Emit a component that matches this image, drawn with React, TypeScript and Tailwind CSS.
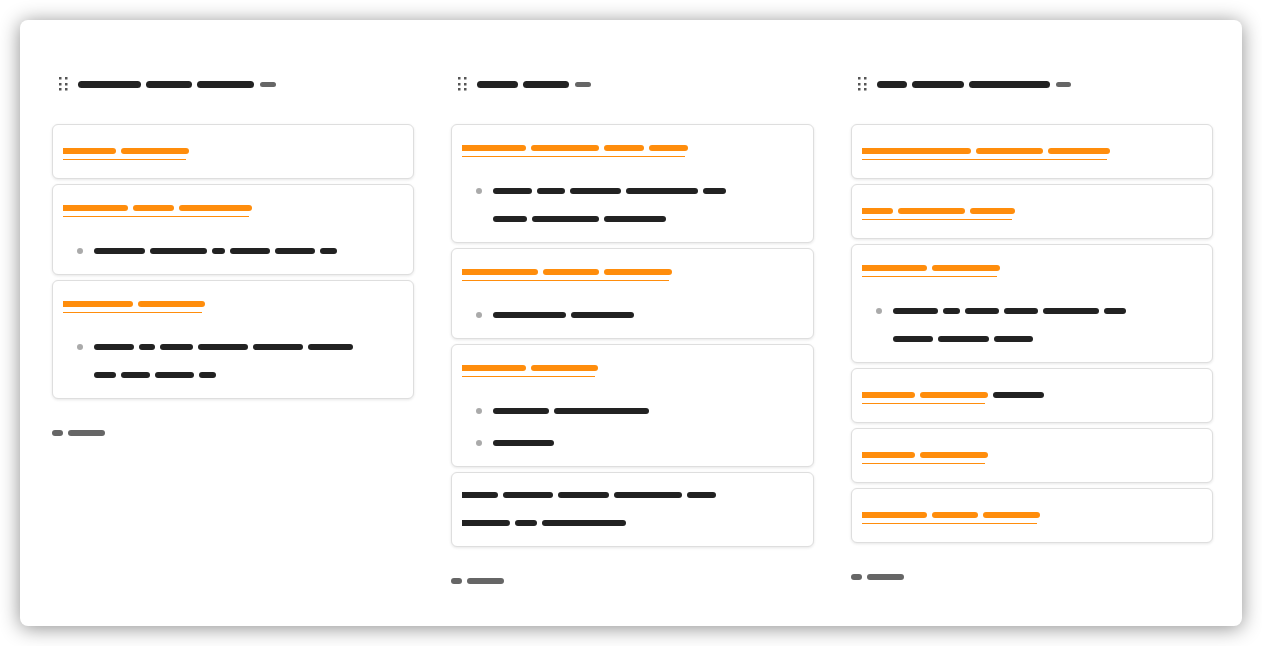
type Row = number[];

type CardData = {
  title?: number[];
  trail?: number[];
  items?: Row[][];
  para?: Row[];
};

type Column = {
  header: number[];
  count: number;
  cards: CardData[];
};

const columns: Column[] = [
  {
    header: [63, 46, 57],
    count: 16,
    cards: [
      { title: [53, 68] },
      { title: [65, 41, 73], items: [[[51, 57, 13, 40, 40, 17]]] },
      {
        title: [70, 67],
        items: [[[40, 16, 33, 50, 50, 45], [22, 29, 39, 17]]],
      },
    ],
  },
  {
    header: [41, 46],
    count: 16,
    cards: [
      {
        title: [64, 68, 40, 39],
        items: [[[39, 28, 51, 72, 23], [34, 67, 62]]],
      },
      { title: [76, 56, 68], items: [[[73, 63]]] },
      { title: [64, 67], items: [[[56, 95]], [[61]]] },
      { para: [[36, 50, 51, 68, 29], [48, 22, 84]] },
    ],
  },
  {
    header: [30, 52, 81],
    count: 15,
    cards: [
      { title: [109, 67, 62] },
      { title: [31, 67, 45] },
      {
        title: [65, 68],
        items: [[[45, 17, 34, 34, 56, 22], [40, 51, 39]]],
      },
      { title: [53, 68], trail: [51] },
      { title: [53, 68] },
      { title: [65, 46, 57] },
    ],
  },
];

// squareStart: the first bar of a line that starts flush with the card text edge
function Bars({ widths, cls, squareStart }: { widths: number[]; cls: string; squareStart?: boolean }) {
  return (
    <div className="flex gap-[5px]">
      {widths.map((w, i) => (
        <span
          key={i}
          className={`block ${squareStart && i === 0 ? "rounded-r-full" : "rounded-full"} ${cls}`}
          style={{ width: w }}
        />
      ))}
    </div>
  );
}

function Handle() {
  return (
    <svg width="9" height="14" viewBox="0 0 9 14" className="ml-[7px] shrink-0">
      {[0, 6].map((x) =>
        [0, 6, 11].map((y) => (
          <rect key={`${x}-${y}`} x={x} y={y} width="2.5" height="2.5" fill="#555" />
        ))
      )}
    </svg>
  );
}

function Title({ widths, trail }: { widths: number[]; trail?: number[] }) {
  return (
    <div className="flex h-5 items-start gap-[5px] pt-[7px]">
      <div className="flex flex-col gap-[5px]">
        <Bars widths={widths} cls="h-[6px] bg-[#ff8d0c]" squareStart />
        <div className="h-px w-[calc(100%-3px)] bg-[#ff8d0c]" />
      </div>
      {trail && <Bars widths={trail} cls="h-[6px] bg-[#222]" />}
    </div>
  );
}

function Card({ card }: { card: CardData }) {
  const base =
    "rounded-[6px] border border-[#dedede] bg-white px-[10px] shadow-[0_1px_3px_rgba(0,0,0,0.1)]";

  if (card.para) {
    return (
      <div className={`${base} pt-[8px] pb-[9px]`}>
        {card.para.map((row, i) => (
          <div key={i} className="flex h-[28px] items-center">
            <Bars widths={row} cls="h-[6px] bg-[#222]" squareStart />
          </div>
        ))}
      </div>
    );
  }

  if (!card.items) {
    return (
      <div className={`${base} h-[55px] pt-[16px]`}>
        <Title widths={card.title!} trail={card.trail} />
      </div>
    );
  }

  return (
    <div className={`${base} pt-[13px] pb-[9px]`}>
      <Title widths={card.title!} />
      <ul className="mt-[19px] flex flex-col gap-1">
        {card.items.map((rows, i) => (
          <li key={i} className="relative pl-[31px]">
            <span className="absolute left-[14px] top-[11px] h-[6px] w-[6px] rounded-full bg-[#aaa]" />
            {rows.map((row, j) => (
              <div key={j} className="flex h-[28px] items-center">
                <Bars widths={row} cls="h-[6px] bg-[#222]" />
              </div>
            ))}
          </li>
        ))}
      </ul>
    </div>
  );
}

export default function App() {
  return (
    <div className="min-h-screen bg-white p-5 font-['Liberation_Sans',sans-serif]">
      <div className="grid h-[606px] grid-cols-3 items-start gap-[37px] rounded-lg bg-white pt-[54px] pl-8 pr-[29px] shadow-[0_2px_20px_rgba(0,0,0,0.45)]">
        {columns.map((col, i) => (
          <section key={i} className="flex flex-col">
            <div className="flex h-5 items-center gap-[10px]">
              <Handle />
              <div className="flex items-center gap-[6px]">
                <Bars widths={col.header} cls="h-[7px] bg-[#222]" />
                <span className="block h-[5px] rounded-full bg-[#666]" style={{ width: col.count }} />
              </div>
            </div>
            <div className="mt-[30px] flex flex-col gap-[5px]">
              {col.cards.map((c, j) => (
                <Card key={j} card={c} />
              ))}
            </div>
            <div className="mt-[31px]">
              <Bars widths={[11, 37]} cls="h-[6px] bg-[#666]" />
            </div>
          </section>
        ))}
      </div>
    </div>
  );
}
